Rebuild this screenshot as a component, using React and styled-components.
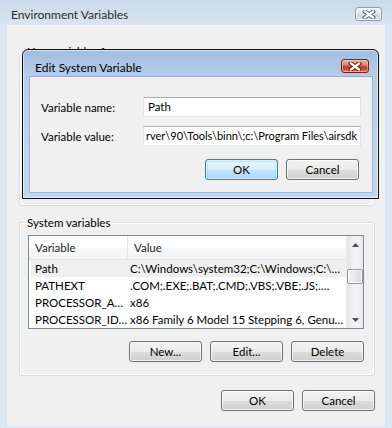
import React from 'react';
import styled, { createGlobalStyle, css } from 'styled-components';

const FONT = `Lato, "Noto Sans", "Liberation Sans", sans-serif`;

const Global = createGlobalStyle`
  html, body { margin: 0; padding: 0; }
  body {
    width: 392px; height: 428px; overflow: hidden;
    font-family: ${FONT}; font-size: 11.5px; color: #000;
    background: #dbe6f3;
  }
  * { box-sizing: border-box; }
`;

const Window = styled.div`
  position: relative;
  width: 392px;
  height: 428px;
  background: linear-gradient(#cbd9ea, #d9e5f2 26px, #dce7f4);
  display: flex;
  flex-direction: column;
`;

const TitleBar = styled.div`
  height: 25px;
  display: flex;
  align-items: flex-start;
  justify-content: space-between;
  padding: 0 10px 0 11px;
`;

const Title = styled.div`
  margin-top: ${p => p.$top || 7}px;
  line-height: 15px;
  font-size: 12px;
  color: ${p => p.$color || '#2a2a2a'};
  white-space: nowrap;
`;

const CloseBtn = styled.div`
  margin-top: ${p => p.$top}px;
  width: ${p => p.$w}px;
  height: 14px;
  border-radius: 3px;
  display: flex;
  align-items: center;
  justify-content: center;
  ${p => p.$red ? css`
    border: 1px solid #7a2418;
    background: linear-gradient(#eab0a2 0%, #dc8570 40%, #c5432d 55%, #c34a30 75%, #d98a6c 100%);
    box-shadow: inset 0 0 0 1px rgba(255,220,210,.45);
  ` : css`
    border: 1px solid #8c9cb3;
    background: linear-gradient(#eef3f9 0%, #dfe7f1 45%, #cbd7e6 55%, #d9e3ef 100%);
    box-shadow: inset 0 0 0 1px rgba(255,255,255,.6);
  `}
`;

const XGlyph = ({ outline }) => (
  <svg width="14" height="9" viewBox="0 0 14 9">
    <path d="M3 1.5 L11 7.5 M11 1.5 L3 7.5" stroke={outline} strokeWidth="4.2" strokeLinecap="square" fill="none" />
    <path d="M3 1.5 L11 7.5 M11 1.5 L3 7.5" stroke="#fff" strokeWidth="2.2" strokeLinecap="square" fill="none" />
  </svg>
);

const Client = styled.div`
  margin: 0 7px;
  height: 401px;
  background: #f0f0f0;
  padding: 26px 10px 0 12px;
  display: flex;
  flex-direction: column;
`;

const Group = styled.div`
  position: relative;
  width: 356px;
  height: ${p => p.$h}px;
  margin-top: ${p => p.$mt || 0}px;
  border: 1px solid #d5dfe5;
  border-radius: 3px;
  box-shadow: inset 0 0 0 1px #fff;
  padding: 12px 10px 0 8px;
  display: flex;
  flex-direction: column;
`;

const Legend = styled.span`
  position: absolute;
  top: -8px;
  left: 6px;
  padding: 0 1px;
  line-height: 15px;
  background: #f0f0f0;
  white-space: nowrap;
`;

const ListView = styled.div`
  width: 336px;
  height: 94px;
  border: 1px solid #828790;
  background: #fff;
  display: flex;
  overflow: hidden;
`;

const ListBody = styled.div`
  flex: 1;
  display: flex;
  flex-direction: column;
  overflow: hidden;
`;

const Header = styled.div`
  height: 24px;
  flex: none;
  display: flex;
  background: linear-gradient(#fff, #fff 50%, #f7f8fa 51%, #f3f4f6);
  border-bottom: 1px solid #e5e5e5;
`;

const HeaderCell = styled.div`
  width: ${p => p.$w ? `${p.$w}px` : 'auto'};
  flex: ${p => p.$w ? 'none' : 1};
  padding: 3px 0 0 6px;
  line-height: 17px;
  border-right: ${p => p.$w ? '1px solid #e5e5e5' : 'none'};
  white-space: nowrap;
  color: #1e1e1e;
`;

const Row = styled.div`
  height: 17px;
  flex: none;
  margin-left: 2px;
  display: flex;
  background: ${p => p.$sel ? '#efefef' : 'transparent'};
`;

const Cell = styled.div`
  width: ${p => p.$w ? `${p.$w}px` : 'auto'};
  flex: ${p => p.$w ? 'none' : 1};
  padding-left: ${p => p.$pl}px;
  line-height: 18px;
  white-space: nowrap;
  overflow: hidden;
`;

const ScrollBar = styled.div`
  width: 17px;
  flex: none;
  display: flex;
  flex-direction: column;
  background: linear-gradient(90deg, #e3e3e3, #f2f2f2 40%, #f2f2f2 70%, #e8e8e8);
  border-left: 1px solid #ececec;
`;

const ArrowBox = styled.div`
  height: 17px;
  flex: none;
  display: flex;
  align-items: center;
  justify-content: center;
`;

const Track = styled.div`
  flex: 1;
  display: flex;
  flex-direction: column;
`;

const Thumb = styled.div`
  margin: 16px 0 0 0;
  width: 16px;
  height: 15px;
  border: 1px solid #979797;
  border-radius: 2px;
  background: linear-gradient(90deg, #f5f5f5, #e6e6e6 50%, #d8d8d8);
  box-shadow: inset 0 0 0 1px #fbfbfb;
`;

const Arrow = ({ down }) => (
  <svg width="7" height="4" viewBox="0 0 7 4">
    <path d={down ? 'M0 0 H7 L3.5 4 Z' : 'M0 4 H7 L3.5 0 Z'} fill="#4d4d4d" />
  </svg>
);

const ButtonRow = styled.div`
  display: flex;
  justify-content: flex-end;
  gap: 8px;
  margin-top: ${p => p.$mt}px;
  padding-right: ${p => p.$pr || 0}px;
`;

const Button = styled.div`
  width: 73px;
  height: 21px;
  border-radius: 3px;
  display: flex;
  align-items: center;
  justify-content: center;
  font-size: 11.5px;
  line-height: 15px;
  color: #000;
  ${p => p.$default ? css`
    border: 1px solid #3c7fb1;
    background: linear-gradient(#eaf6fd 0%, #d9f0fc 50%, #bee6fd 51%, #a9dbf6 100%);
    box-shadow: inset 0 0 0 1px #d6f1fd, inset 0 0 0 2px rgba(120,210,245,.35);
  ` : css`
    border: 1px solid #707070;
    background: linear-gradient(#f2f2f2 0%, #ebebeb 50%, #dddddd 51%, #cfcfcf 100%);
    box-shadow: inset 0 0 0 1px rgba(255,255,255,.75);
  `}
`;

const Dialog = styled.div`
  position: absolute;
  left: 22px;
  top: 49px;
  width: 357px;
  height: 150px;
  border: 1px solid #101010;
  border-radius: 6px 6px 0 0;
  background: linear-gradient(#a2bde0 0%, #b2c9e7 20px, #bad1ec 40px, #c1d7ef 100%);
  box-shadow: inset 0 0 0 1px rgba(255,255,255,.55);
  display: flex;
  flex-direction: column;
`;

const DialogTitleBar = styled.div`
  height: 27px;
  flex: none;
  display: flex;
  align-items: flex-start;
  justify-content: space-between;
  padding: 0 9px 0 12px;
`;

const DialogClient = styled.div`
  flex: 1;
  margin: 0 6px 6px 7px;
  background: #f0f0f0;
  box-shadow: 0 0 0 1px rgba(90,120,160,.35);
  padding: 20px 11px 0 11px;
  display: flex;
  flex-direction: column;
`;

const FieldRow = styled.div`
  display: flex;
  align-items: center;
  height: 20px;
  margin-top: ${p => p.$mt || 0}px;
`;

const Label = styled.div`
  width: 102px;
  flex: none;
  white-space: nowrap;
`;

const TextBox = styled.div`
  width: 218px;
  height: 20px;
  border: 1px solid;
  border-color: #abadb3 #dbdfe6 #e3e9ef #e2e3ea;
  background: #fff;
  padding: 0 3px 0 4px;
  display: flex;
  align-items: center;
  justify-content: ${p => p.$end ? 'flex-end' : 'flex-start'};
  overflow: hidden;
  white-space: nowrap;
  line-height: 16px;
  font-size: ${p => p.$fs || 11.5}px;
`;

const rows = [
  ['Path', 'C:\\Windows\\system32;C:\\Windows;C:\\…', true],
  ['PATHEXT', '.COM;.EXE;.BAT;.CMD;.VBS;.VBE;.JS;.…'],
  ['PROCESSOR_A…', 'x86'],
  ['PROCESSOR_ID…', 'x86 Family 6 Model 15 Stepping 6, Genu…'],
];

export default function App() {
  return (
    <>
      <Global />
      <Window>
        <TitleBar>
          <Title>Environment Variables</Title>
          <CloseBtn $top={7} $w={27}><XGlyph outline="#5d6e86" /></CloseBtn>
        </TitleBar>
        <Client>
          <Group $h={155}>
            <Legend>User variables for user</Legend>
          </Group>
          <Group $h={154} $mt={16}>
            <Legend>System variables</Legend>
            <ListView>
              <ListBody>
                <Header>
                  <HeaderCell $w={99}>Variable</HeaderCell>
                  <HeaderCell>Value</HeaderCell>
                </Header>
                {rows.map(([n, v, sel]) => (
                  <Row key={n} $sel={sel}>
                    <Cell $w={97} $pl={4}>{n}</Cell>
                    <Cell $pl={2}>{v}</Cell>
                  </Row>
                ))}
              </ListBody>
              <ScrollBar>
                <ArrowBox><Arrow /></ArrowBox>
                <Track><Thumb /></Track>
                <ArrowBox><Arrow down /></ArrowBox>
              </ScrollBar>
            </ListView>
            <ButtonRow $mt={12}>
              <Button>New...</Button>
              <Button>Edit...</Button>
              <Button>Delete</Button>
            </ButtonRow>
          </Group>
          <ButtonRow $mt={14}>
            <Button>OK</Button>
            <Button>Cancel</Button>
          </ButtonRow>
        </Client>

        <Dialog>
          <DialogTitleBar>
            <Title $top={10} $color="#000">Edit System Variable</Title>
            <CloseBtn $top={9} $w={28} $red><XGlyph outline="#6e1a10" /></CloseBtn>
          </DialogTitleBar>
          <DialogClient>
            <FieldRow>
              <Label>Variable name:</Label>
              <TextBox>Path</TextBox>
            </FieldRow>
            <FieldRow $mt={9}>
              <Label>Variable value:</Label>
              <TextBox $end $fs={11}>rver\90\Tools\binn\;c:\Program Files\airsdk</TextBox>
            </FieldRow>
            <ButtonRow $mt={13} $pr={2}>
              <Button $default>OK</Button>
              <Button>Cancel</Button>
            </ButtonRow>
          </DialogClient>
        </Dialog>
      </Window>
    </>
  );
}
